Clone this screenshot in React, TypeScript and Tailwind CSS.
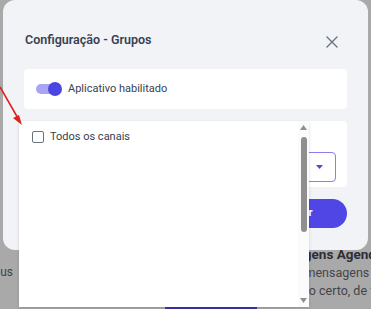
import React from "react";

export default function App() {
  return (
    <div
      className="relative w-[371px] h-[309px] overflow-hidden bg-[#a9a9a9]"
      style={{ fontFamily: "Roboto, 'Noto Sans', sans-serif" }}
    >
      {/* background page (dimmed by overlay) */}
      <div className="flex pt-[245px] h-full">
        <div className="w-[259px] shrink-0 flex flex-col">
          <div className="h-[18px]" />
          <div className="w-[13px] flex justify-end">
            <span className="text-[12px] text-[#444449] leading-[18px] whitespace-nowrap">
              Acompanhe seus
            </span>
          </div>
          <div className="mt-auto ml-[165px] w-[92px] h-[4px] rounded-t-[3px] bg-[#3c36a6]" />
        </div>
        <div className="flex flex-col whitespace-nowrap">
          <div className="text-[13.5px] font-bold text-[#2e2e33] leading-[18px] ml-[4px]">
            Mensagens Agendadas
          </div>
          <div className="text-[12.5px] text-[#444449] leading-[18px] mt-[1px]">
            Agende mensagens para
          </div>
          <div className="text-[12.5px] text-[#444449] leading-[18px]">
            moment o certo, de forma
          </div>
        </div>
      </div>

      {/* modal */}
      <div className="absolute left-[3px] top-0 w-[365px] h-[250px] rounded-[12px] bg-[#f1f3f7] px-[21px] pt-[30px]">
        <div className="flex items-center justify-between">
          <div className="text-[12.5px] font-semibold text-[#374151] leading-[20px] pl-[1px]">
            Configuração - Grupos
          </div>
          <svg width="12" height="12" viewBox="0 0 12 12" className="mr-[9px] mt-[3px]">
            <path d="M1 1L11 11M11 1L1 11" stroke="#6b7280" strokeWidth="1.4" strokeLinecap="round" />
          </svg>
        </div>
        <div className="mt-[19px] h-[40px] rounded-[4px] bg-white flex items-center pl-[12px] gap-[6px]">
          <div className="relative w-[26px] h-[14px] flex items-center">
            <div className="w-[24px] h-[10px] rounded-full bg-[#a9a4f4]" />
            <div className="absolute right-0 top-0 w-[14px] h-[14px] rounded-full bg-[#4b45e2]" />
          </div>
          <span className="text-[11px] text-[#374151]">Aplicativo habilitado</span>
        </div>
        <div className="mt-[12px] h-[66px] rounded-[4px] bg-white flex items-end justify-end pr-[11px] pb-[5px]">
          <div className="w-[200px] h-[30px] rounded-[4px] border border-[#8a80f2] flex items-center justify-end pr-[12px]">
            <svg width="7" height="4" viewBox="0 0 7 4">
              <path d="M0 0H7L3.5 4Z" fill="#4f46e5" />
            </svg>
          </div>
        </div>
        <div className="mt-[12px] flex justify-end">
          <div className="w-[100px] h-[29px] rounded-full bg-[#5046e5] flex items-center justify-center text-white text-[11px] font-bold">
            Salvar
          </div>
        </div>
      </div>

      {/* dropdown */}
      <div className="absolute left-[19px] top-[121px] w-[290px] h-[186px] bg-white shadow-[0_1px_3px_rgba(0,0,0,0.15)] flex">
        <div className="flex-1 pl-[13px] pt-[9px]">
          <div className="flex items-center gap-[6px]">
            <div className="w-[12px] h-[12px] rounded-[2px] border-[1.5px] border-[#6b7280]" />
            <span className="text-[11px] text-[#374151] leading-[14px]">Todos os canais</span>
          </div>
        </div>
        <div className="w-[11px] flex flex-col items-center py-[4px] bg-[#fbfbfb]">
          <svg width="7" height="5" viewBox="0 0 7 5">
            <path d="M3.5 0L7 5H0Z" fill="#8f8f8f" />
          </svg>
          <div className="mt-[7px] w-[6px] h-[95px] rounded-full bg-[#8f8f8f]" />
          <div className="flex-1" />
          <svg width="7" height="5" viewBox="0 0 7 5">
            <path d="M0 0H7L3.5 5Z" fill="#8f8f8f" />
          </svg>
        </div>
      </div>

      {/* red annotation arrow */}
      <svg className="absolute left-0 top-[80px]" width="30" height="50" viewBox="0 0 30 50">
        <path d="M0 7L19 40" stroke="#e0201b" strokeWidth="1.6" />
        <path d="M22 45L13 38L19 35Z" fill="#e0201b" />
      </svg>
    </div>
  );
}
